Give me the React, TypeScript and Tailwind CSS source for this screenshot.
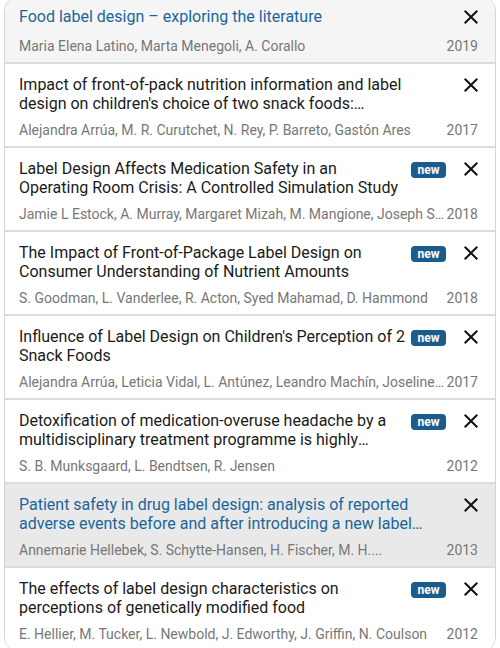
import type { FC } from "react";

interface IPaper {
  title: string;
  authors: string;
  year: number;
  isNew?: boolean;
  highlight?: "top" | "active";
}

const papers: IPaper[] = [
  {
    title: "Food label design – exploring the literature",
    authors: "Maria Elena Latino, Marta Menegoli, A. Corallo",
    year: 2019,
    highlight: "top",
  },
  {
    title:
      "Impact of front-of-pack nutrition information and label design on children's choice of two snack foods:…",
    authors: "Alejandra Arrúa, M. R. Curutchet, N. Rey, P. Barreto, Gastón Ares",
    year: 2017,
  },
  {
    title:
      "Label Design Affects Medication Safety in an Operating Room Crisis: A Controlled Simulation Study",
    authors:
      "Jamie L Estock, A. Murray, Margaret Mizah, M. Mangione, Joseph S. Goode, D. Eibling",
    year: 2018,
    isNew: true,
  },
  {
    title:
      "The Impact of Front-of-Package Label Design on Consumer Understanding of Nutrient Amounts",
    authors: "S. Goodman, L. Vanderlee, R. Acton, Syed Mahamad, D. Hammond",
    year: 2018,
    isNew: true,
  },
  {
    title:
      "Influence of Label Design on Children's Perception of 2 Snack Foods",
    authors:
      "Alejandra Arrúa, Leticia Vidal, L. Antúnez, Leandro Machín, Joseline Martínez, G. Ares",
    year: 2017,
    isNew: true,
  },
  {
    title:
      "Detoxification of medication-overuse headache by a multidisciplinary treatment programme is highly effective: a comparison of two consecutive treatment methods in an open-label design",
    authors: "S. B. Munksgaard, L. Bendtsen, R. Jensen",
    year: 2012,
    isNew: true,
  },
  {
    title:
      "Patient safety in drug label design: analysis of reported adverse events before and after introducing a new label design",
    authors: "Annemarie Hellebek, S. Schytte-Hansen, H. Fischer, M. H....",
    year: 2013,
    highlight: "active",
  },
  {
    title:
      "The effects of label design characteristics on perceptions of genetically modified food",
    authors:
      "E. Hellier, M. Tucker, L. Newbold, J. Edworthy, J. Griffin, N. Coulson",
    year: 2012,
    isNew: true,
  },
];

const CloseIcon: FC = () => (
  <svg viewBox="0 0 24 24" width="24" height="24" fill="#111">
    <path d="M19 6.41L17.59 5 12 10.59 6.41 5 5 6.41 10.59 12 5 17.59 6.41 19 12 13.41 17.59 19 19 17.59 13.41 12z" />
  </svg>
);

const PaperRow: FC<Readonly<{ paper: IPaper }>> = ({ paper }) => {
  const bg =
    paper.highlight === "top"
      ? "bg-[#f5f5f5]"
      : paper.highlight === "active"
        ? "bg-[#e9e9e9]"
        : "bg-white";
  const titleColor = paper.highlight ? "text-[#1b659c]" : "text-[#1a1a1a]";

  return (
    <div
      className={`border-b-2 border-[#dcdcdc] pb-1.5 pl-[14px] pr-[17px] pt-[11px] ${bg}`}
    >
      <div className="flex items-start">
        <div
          className={`line-clamp-2 min-w-0 flex-1 text-[16px] leading-[19px] ${titleColor}`}
        >
          {paper.title}
        </div>
        {paper.isNew && (
          <span className="ml-[6px] mt-[3px] flex h-4 w-[35px] shrink-0 items-center justify-center rounded-[4px] bg-[#1b5c8c] text-[12px] font-bold leading-none text-white">
            new
          </span>
        )}
        <button className="-mr-[5px] -mt-[2px] ml-[13px] h-6 w-6 shrink-0">
          <CloseIcon />
        </button>
      </div>
      <div className="mt-[7px] flex items-center text-[14px] leading-5 text-[#777]">
        <span className="min-w-0 flex-1 truncate">{paper.authors}</span>
        <span className="ml-0.5 shrink-0">{paper.year}</span>
      </div>
    </div>
  );
};

const App: FC = () => {
  return (
    <div
      className="h-[648px] overflow-hidden bg-white"
      style={{ fontFamily: "Roboto, 'Liberation Sans', sans-serif" }}
    >
      <div className="mx-1 -mt-[5px] overflow-hidden rounded-2xl border border-[#d4d4d4]">
        {papers.map((p) => (
          <PaperRow key={p.title} paper={p} />
        ))}
      </div>
    </div>
  );
};

export default App;
